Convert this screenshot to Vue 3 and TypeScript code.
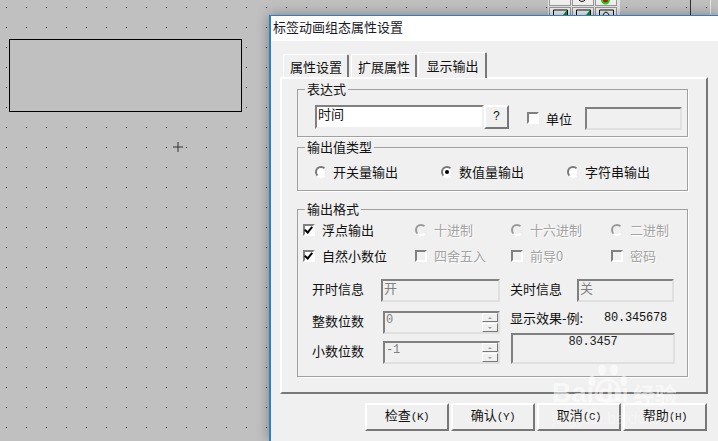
<script setup lang="ts">
const radios = ['开关量输出', '数值量输出', '字符串输出']
const tabs = ['属性设置', '扩展属性', '显示输出']
</script>

<template>
  <div class="screen">
    <svg class="dots" width="718" height="441">
      <defs>
        <pattern id="dotgrid" x="6" y="7" width="20" height="20" patternUnits="userSpaceOnUse">
          <rect width="1" height="1" fill="#333" />
        </pattern>
      </defs>
      <rect width="718" height="441" fill="url(#dotgrid)" />
      <rect x="9.5" y="39.5" width="232" height="72" fill="#c0c0c0" stroke="#000" />
      <path d="M178 142v10M173 147h10" stroke="#333" fill="none" />
      <path d="M690.5 0v15" stroke="#333" />
      <path d="M710.5 0v15" stroke="#e8e8e8" />
    </svg>

    <div class="toolbar">
      <svg width="72" height="15">
        <rect width="72" height="15" fill="#e4e4e4" />
        <g fill="#f0f0f0" stroke="#999">
          <rect x="1.5" y="-4.5" width="21" height="10" />
          <rect x="24.5" y="-4.5" width="21" height="10" />
          <rect x="47.5" y="-4.5" width="21" height="10" />
          <rect x="1.5" y="7.5" width="21" height="12" />
          <rect x="24.5" y="7.5" width="21" height="12" />
          <rect x="47.5" y="7.5" width="21" height="12" />
        </g>
        <path d="M30 -1q4 5 8 0" stroke="#111" fill="none" />
        <circle cx="57.5" cy="0" r="3.5" fill="#d01010" stroke="#10e010" stroke-width="2" />
        <path d="M5.5 15v-5h14v5M28.5 15v-5h14v5M51.5 15v-5h14v5" stroke="#111" fill="none" />
        <path d="M15 15l4-5v5zM38 15l4-5v5z" fill="#109030" />
        <path d="M55 15q3-6 6 0" stroke="#111" fill="none" />
      </svg>
    </div>

    <section class="dialog">
      <header class="title">标签动画组态属性设置</header>
      <div class="body">
        <nav class="tabs">
          <span v-for="(t, i) in tabs" :key="t" class="tab" :class="{ active: i === 2 }">{{ t }}</span>
        </nav>

        <div class="panel">
          <div class="group g1">
            <span class="legend">表达式</span>
            <div class="expr">时间</div>
            <button class="qbtn">?</button>
            <span class="check unit-check"></span>
            <span class="unit-label">单位</span>
            <div class="field unit-field"></div>
          </div>

          <div class="group g2">
            <span class="legend">输出值类型</span>
            <div class="radio-row">
              <label v-for="(r, i) in radios" :key="r" class="opt">
                <span class="radio" :class="{ on: i === 1 }"></span>{{ r }}
              </label>
            </div>
          </div>

          <div class="group g3">
            <span class="legend">输出格式</span>
            <div class="fmt">
              <label class="opt"><span class="check on"></span>浮点输出</label>
              <label class="opt off"><span class="radio"></span>十进制</label>
              <label class="opt off"><span class="radio"></span>十六进制</label>
              <label class="opt off"><span class="radio"></span>二进制</label>
              <label class="opt"><span class="check on"></span>自然小数位</label>
              <label class="opt off"><span class="check"></span>四舍五入</label>
              <label class="opt off"><span class="check"></span>前导0</label>
              <label class="opt off"><span class="check"></span>密码</label>
            </div>
            <div class="lower">
              <div class="left">
                <div class="lrow r-on">
                  <span class="lbl on-lbl">开时信息</span>
                  <div class="field grow txt">开</div>
                </div>
                <div class="lrow r-int">
                  <span class="lbl spin-lbl">整数位数</span>
                  <div class="field grow txt mono">0
                    <span class="spin"><i class="up"></i><i class="down"></i></span>
                  </div>
                </div>
                <div class="lrow r-dec">
                  <span class="lbl spin-lbl">小数位数</span>
                  <div class="field grow txt mono">-1
                    <span class="spin"><i class="up"></i><i class="down"></i></span>
                  </div>
                </div>
              </div>
              <div class="right">
                <div class="lrow r-on">
                  <span class="lbl off-lbl">关时信息</span>
                  <div class="field grow txt">关</div>
                </div>
                <div class="sample"><span>显示效果-例:</span><span class="mono">80.345678</span></div>
                <div class="field readout mono">80.3457</div>
              </div>
            </div>
          </div>
        </div>

        <footer class="actions">
          <button class="btn">检查<span class="mono-s">(K)</span></button>
          <button class="btn">确认<span class="mono-s">(Y)</span></button>
          <button class="btn">取消<span class="mono-s">(C)</span></button>
          <button class="btn">帮助<span class="mono-s">(H)</span></button>
        </footer>
      </div>
    </section>

    <div class="mark">
      <svg class="paw" width="44" height="42" viewBox="0 0 44 42">
        <g fill="#fff" opacity=".55">
          <ellipse cx="6" cy="17" rx="3.5" ry="5.5" />
          <ellipse cx="16" cy="6" rx="4" ry="5.5" />
          <ellipse cx="28" cy="6" rx="4" ry="5.5" />
          <ellipse cx="38" cy="17" rx="3.5" ry="5.5" />
        </g>
        <path d="M10 30q2-14 12-14t12 14q0 7-12 7t-12-7z" fill="none" stroke="#fff" stroke-width="3" opacity=".5" />
      </svg>
      <span class="mark-a">Bai</span><span class="mark-b">du</span><span class="mark-c">经验</span>
      <span class="mark-d">jingyan.baidu.com</span>
    </div>
  </div>
</template>

<style>
html, body { margin: 0; padding: 0; overflow: hidden; }
</style>

<style scoped>
.screen {
  position: relative;
  width: 718px;
  height: 441px;
  overflow: hidden;
  background: #c0c0c0;
  font: 13px/16px "Noto Sans CJK SC", sans-serif;
  color: #111;
}
.dots { position: absolute; inset: 0; }
.toolbar { position: absolute; left: 548px; top: 0; width: 72px; height: 15px; }
.toolbar svg { display: block; }

.dialog {
  position: absolute;
  left: 269px;
  top: 15px;
  width: 449px;
  height: 426px;
  box-sizing: border-box;
  border-left: 2px solid #2f7fc8;
  border-top: 1px solid #2f7fc8;
  background: #f0f0f0;
  box-shadow: 0 0 12px rgba(0, 0, 0, .35);
  display: flex;
  flex-direction: column;
}
.title {
  height: 25px;
  flex: none;
  background: #fff;
  padding-left: 2px;
  line-height: 22px;
  color: #1a1a2a;
  white-space: nowrap;
}
.body { flex: 1; padding: 11px 0 0 9px; }

.tabs {
  display: flex;
  align-items: flex-end;
  height: 25px;
  padding-left: 3px;
  position: relative;
  z-index: 1;
}
.tab {
  box-sizing: border-box;
  width: 66px;
  height: 23px;
  margin-right: 2px;
  border: 1px solid #fff;
  border-bottom: 0;
  border-right: 2px solid #777;
  border-radius: 2px 2px 0 0;
  text-align: center;
  padding-left: 1px;
  line-height: 24px;
  background: #f0f0f0;
}
.tab.active {
  width: 69px;
  height: 26px;
  margin: 0 0 -1px -1px;
  line-height: 25px;
}

.panel {
  box-sizing: border-box;
  width: 428px;
  height: 317px;
  padding: 10px 0 0 15px;
  border: 2px solid;
  border-color: #fff #777 #777 #fff;
}

.group {
  position: relative;
  box-sizing: border-box;
  width: 391px;
  border: 1px solid #a0a0a0;
  box-shadow: 1px 1px 0 #fff;
}
.legend {
  position: absolute;
  left: 7px;
  top: -9px;
  padding: 0 2px;
  background: #f0f0f0;
}
.g1 {
  height: 48px;
  display: flex;
  align-items: flex-start;
  padding: 15px 0 0 17px;
}
.expr {
  box-sizing: border-box;
  width: 169px;
  height: 24px;
  border: 2px solid;
  border-color: #808080 #f0f0f0 #f0f0f0 #808080;
  background: #fff;
  padding-left: 1px;
  line-height: 13px;
}
.qbtn {
  box-sizing: border-box;
  width: 25px;
  height: 24px;
  padding: 0;
  border: 2px solid;
  border-color: #fff #777 #777 #fff;
  background: #f0f0f0;
  font: 12px "Liberation Mono", monospace;
  color: #111;
}
.unit-check { margin: 7px 0 0 18px; }
.unit-label { margin: 6px 13px 0 7px; }
.field {
  position: relative;
  box-sizing: border-box;
  border: 2px solid;
  border-color: #808080 #e0e0e0 #e0e0e0 #808080;
  background: #f0f0f0;
}
.unit-field { width: 97px; height: 23px; margin-top: 2px; }

.g2 { height: 44px; margin-top: 10px; padding: 16px 0 0 17px; }
.radio-row { display: grid; grid-template-columns: repeat(3, 126px); }
.opt { display: flex; align-items: center; gap: 6px; white-space: nowrap; }
.opt.off { color: #a3a3a3; text-shadow: 1px 1px 0 #fff; }

.check, .radio {
  display: inline-block;
  flex: none;
  box-sizing: border-box;
  width: 12px;
  height: 12px;
  position: relative;
}
.check {
  border: 2px solid;
  border-color: #808080 #fff #fff #808080;
  background: #fff;
}
.opt.off .check { background: #f0f0f0; }
.check.on::after {
  content: "";
  position: absolute;
  left: 1px;
  top: -1px;
  width: 3px;
  height: 6px;
  border: solid #000;
  border-width: 0 2px 2px 0;
  transform: rotate(40deg);
}
.radio {
  border-radius: 50%;
  border: 2px solid;
  border-color: #777 #eee #fff #777;
  background: #fff;
}
.opt.off .radio { background: #f0f0f0; border-color: #999 #eee #fff #999; }
.radio.on::after {
  content: "";
  position: absolute;
  left: 2px;
  top: 2px;
  width: 4px;
  height: 4px;
  border-radius: 50%;
  background: #000;
}

.g3 { height: 168px; margin-top: 18px; padding: 7px 0 0 5px; }
.fmt {
  display: grid;
  grid-template-columns: 112px 96px 100px 70px;
  grid-auto-rows: 26px;
}
.fmt .opt { gap: 7px; }
.lower {
  display: grid;
  grid-template-columns: 188px 164px;
  column-gap: 10px;
  margin: 10px 0 0 9px;
}
.left, .right { display: flex; flex-direction: column; }
.lrow { display: flex; align-items: center; }
.r-on { height: 23px; }
.r-int { height: 23px; margin-top: 9px; }
.r-dec { height: 23px; margin-top: 7px; }
.lbl { flex: none; padding-bottom: 3px; }
.on-lbl { width: 69px; }
.spin-lbl { width: 71px; }
.off-lbl { width: 67px; }
.grow { flex: 1; height: 23px; }
.txt { color: #808080; padding-left: 1px; line-height: 14px; }
.mono {
  font-family: "Liberation Mono", monospace;
  font-size: 12px;
  letter-spacing: -.2px;
}
.mono-s {
  font-family: "Liberation Mono", monospace;
  font-size: 11px;
  letter-spacing: -.5px;
}
.spin {
  position: absolute;
  right: 0;
  top: 0;
  width: 16px;
  height: 19px;
  display: flex;
  flex-direction: column;
  gap: 1px;
}
.spin i {
  flex: 1;
  position: relative;
  box-sizing: border-box;
  border: 1px solid;
  border-color: #fff #777 #777 #fff;
  background: #f0f0f0;
}
.spin i::after {
  content: "";
  position: absolute;
  left: 5px;
  top: 3px;
  border: 2px solid transparent;
  border-top: 0;
  border-bottom: 2px solid #999;
}
.spin i.down::after { border-bottom: 0; border-top: 2px solid #999; }
.sample {
  display: flex;
  justify-content: space-between;
  width: 157px;
  height: 16px;
  margin-top: 8px;
  line-height: 16px;
}
.readout {
  width: 164px;
  height: 31px;
  margin-top: 7px;
  text-align: center;
  line-height: 15px;
  color: #222;
  margin-left: 1px;
  box-sizing: border-box;
}

.actions {
  display: flex;
  gap: 2px;
  margin: 9px 0 0 85px;
}
.btn {
  box-sizing: border-box;
  width: 84px;
  height: 28px;
  padding: 0 0 5px;
  border: 2px solid;
  border-color: #fff #777 #777 #fff;
  background: #f0f0f0;
  font: 13px "Noto Sans CJK SC", sans-serif;
  color: #111;
}

.mark {
  position: absolute;
  left: 550px;
  top: 364px;
  width: 140px;
  height: 70px;
  color: #fff;
  pointer-events: none;
}
.paw { position: absolute; left: 36px; top: 0; }
.mark-a, .mark-b, .mark-c, .mark-d {
  position: absolute;
  font-family: "Liberation Sans", sans-serif;
  opacity: .55;
  white-space: nowrap;
}
.mark-a { left: 2px; top: 14px; font-size: 27px; line-height: 30px; font-weight: 700; }
.mark-b { left: 48px; top: 14px; font-size: 25px; line-height: 30px; font-weight: 700; }
.mark-c { left: 83px; top: 16px; font: 700 22px/26px "Noto Sans CJK SC", sans-serif; }
.mark-d { left: 2px; top: 45px; font-size: 16px; line-height: 20px; opacity: .3; }
</style>
